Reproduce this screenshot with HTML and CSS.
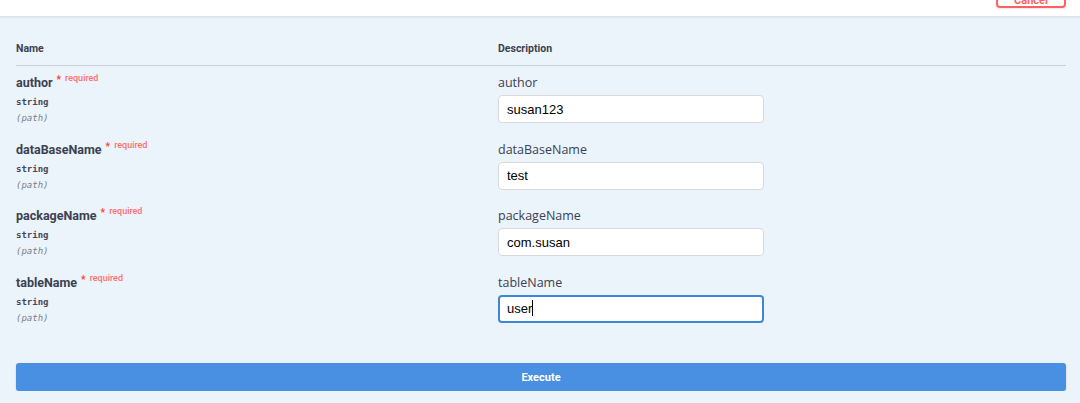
FILE: index.html
```html
<!DOCTYPE html>
<html lang="en">
<head>
    <meta charset="UTF-8">
    <meta name="viewport" content="width=device-width, initial-scale=1.0">
    <title>Parameters</title>
    <link rel="stylesheet" href="styles.css">
</head>
<body>
    <div class="opblock-body">
        <div class="section-header">
            <h4>Parameters</h4>
            <button class="btn-cancel">Cancel</button>
        </div>

        <div class="parameters">
            <div class="param-head">
                <div class="col-name">Name</div>
                <div class="col-desc">Description</div>
            </div>

            <div class="param-row">
                <div class="col-name">
                    <div class="param-name">author<span class="star">*</span><span class="required">required</span></div>
                    <div class="param-type">string</div>
                    <div class="param-in">(path)</div>
                </div>
                <div class="col-desc">
                    <div class="param-label">author</div>
                    <input class="param-input" type="text" value="susan123">
                </div>
            </div>

            <div class="param-row">
                <div class="col-name">
                    <div class="param-name">dataBaseName<span class="star">*</span><span class="required">required</span></div>
                    <div class="param-type">string</div>
                    <div class="param-in">(path)</div>
                </div>
                <div class="col-desc">
                    <div class="param-label">dataBaseName</div>
                    <input class="param-input" type="text" value="test">
                </div>
            </div>

            <div class="param-row">
                <div class="col-name">
                    <div class="param-name">packageName<span class="star">*</span><span class="required">required</span></div>
                    <div class="param-type">string</div>
                    <div class="param-in">(path)</div>
                </div>
                <div class="col-desc">
                    <div class="param-label">packageName</div>
                    <input class="param-input" type="text" value="com.susan">
                </div>
            </div>

            <div class="param-row">
                <div class="col-name">
                    <div class="param-name">tableName<span class="star">*</span><span class="required">required</span></div>
                    <div class="param-type">string</div>
                    <div class="param-in">(path)</div>
                </div>
                <div class="col-desc">
                    <div class="param-label">tableName</div>
                    <div class="param-input focused">user<span class="caret"></span></div>
                </div>
            </div>
        </div>

        <div class="execute-wrapper">
            <button class="btn-execute">Execute</button>
        </div>
    </div>
</body>
</html>
```

FILE: styles.css
```css
body {
    margin: 0;
    background: #ebf3fb;
    font-family: Roboto, "Noto Sans", sans-serif;
    color: #3b4151;
    overflow: hidden;
}
.opblock-body {
    width: 1080px;
}
.section-header {
    display: flex;
    align-items: flex-end;
    justify-content: space-between;
    height: 17px;
    padding: 0 14px 0 16px;
    background: #fff;
    border-bottom: 1px solid #dde3ea;
    box-shadow: 0 1px 2px rgba(0, 0, 0, 0.06);
    box-sizing: border-box;
    overflow: hidden;
}
.section-header h4 {
    margin: 0 0 14px;
    font-size: 13px;
    font-weight: 700;
    line-height: 16px;
}
.btn-cancel {
    align-self: flex-start;
    margin-top: -22px;
    width: 70px;
    height: 30px;
    border: 2px solid #ff6060;
    border-radius: 4px;
    background: transparent;
    color: #ff6060;
    font-family: Roboto, sans-serif;
    font-size: 11px;
    font-weight: 700;
    padding-top: 14px;
    box-shadow: 0 1px 2px rgba(0, 0, 0, 0.1);
}
.parameters {
    margin: 0 14px 0 16px;
}
.param-head {
    display: flex;
    padding: 24px 0 8px;
    border-bottom: 1px solid #c7d0db;
    font-size: 10.5px;
    font-weight: 700;
    line-height: 16px;
}
.col-name {
    width: 482px;
    flex: none;
}
.col-desc {
    flex: 1;
}
.param-row {
    display: flex;
    height: 66.7px;
    padding-top: 6px;
    box-sizing: border-box;
}
.param-name {
    font-size: 12.5px;
    font-weight: 700;
    line-height: 20px;
    padding-top: 1px;
}
.star {
    color: #ff3b3b;
    font-size: 10px;
    position: relative;
    top: -4px;
    margin-left: 4px;
}
.required {
    color: #ff6f6f;
    font-size: 9px;
    font-weight: 500;
    position: relative;
    top: -6px;
    margin-left: 4px;
}
.param-type {
    font-family: "DejaVu Sans Mono", monospace;
    font-size: 9px;
    font-weight: 700;
    color: #454a56;
    line-height: 16px;
}
.param-in {
    font-family: "DejaVu Sans Mono", monospace;
    font-size: 9px;
    font-style: italic;
    color: #7a7f8a;
    line-height: 16px;
}
.param-label {
    font-family: "Open Sans", sans-serif;
    font-size: 12.5px;
    line-height: 20px;
    margin-bottom: 3px;
    padding-top: 1px;
    color: #3b4151;
}
.param-input {
    display: block;
    width: 266px;
    height: 28px;
    box-sizing: border-box;
    margin-top: -1px;
    padding: 0 8px;
    border: 1px solid #d9d9d9;
    border-radius: 4px;
    background: #fff;
    font-family: "Liberation Sans", Arial, sans-serif;
    font-size: 13px;
    color: #000;
    outline: none;
}
.param-input.focused {
    border: 2px solid #3d86d9;
    padding: 0 7px;
    line-height: 24px;
}
.caret {
    display: inline-block;
    width: 1px;
    height: 16px;
    background: #000;
    vertical-align: -3px;
}
.execute-wrapper {
    padding: 30px 14px 0 16px;
}
.btn-execute {
    display: block;
    width: 100%;
    height: 28px;
    border: none;
    border-radius: 3px;
    background: #4990e2;
    color: #fff;
    font-family: Roboto, sans-serif;
    font-size: 11px;
    font-weight: 700;
    padding-top: 2px;
    box-shadow: 0 1px 2px rgba(0, 0, 0, 0.15);
}
```
